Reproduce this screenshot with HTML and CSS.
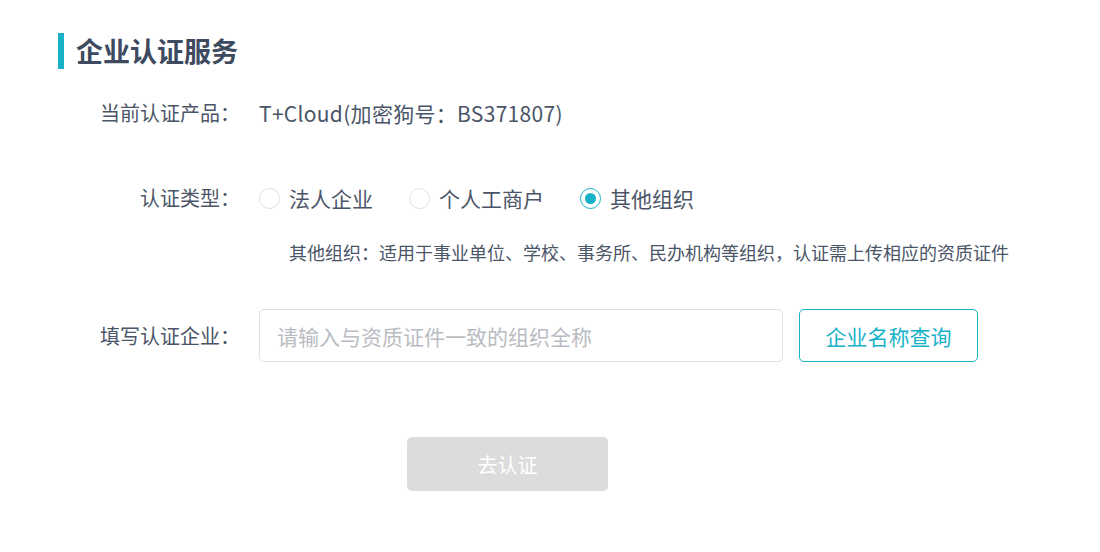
FILE: index.html
```html
<!DOCTYPE html>
<html lang="zh-CN">
<head>
    <meta charset="UTF-8">
    <meta name="viewport" content="width=device-width, initial-scale=1.0">
    <title>企业认证服务</title>
    <link rel="stylesheet" href="styles.css">
</head>
<body>

<div class="page">
    <h1 class="title">企业认证服务</h1>

    <div class="row row-product">
        <span class="label">当前认证产品：</span>
        <span class="value">T+Cloud(加密狗号：BS371807)</span>
    </div>

    <div class="row row-type">
        <span class="label">认证类型：</span>
        <div class="radios">
            <label class="radio"><span class="dot"></span>法人企业</label>
            <label class="radio"><span class="dot"></span>个人工商户</label>
            <label class="radio checked"><span class="dot"></span>其他组织</label>
        </div>
    </div>

    <p class="hint">其他组织：适用于事业单位、学校、事务所、民办机构等组织，认证需上传相应的资质证件</p>

    <div class="row row-company">
        <span class="label">填写认证企业：</span>
        <input type="text" class="company-input" placeholder="请输入与资质证件一致的组织全称">
        <button type="button" class="btn-query">企业名称查询</button>
    </div>

    <button type="button" class="btn-submit" disabled>去认证</button>
</div>

</body>
</html>
```

FILE: styles.css
```css
body {
    margin: 0;
    background-color: #fff;
    font-family: "Noto Sans CJK SC", "Noto Sans", sans-serif;
    color: #4b5568;
}

.page {
    padding: 33px 0 0 58px;
}

.title {
    margin: 0;
    height: 36px;
    line-height: 36px;
    border-left: 6px solid #17b2c8;
    padding-left: 12px;
    font-size: 27px;
    font-weight: bold;
    color: #3d4a60;
}

.row {
    display: flex;
    align-items: center;
    font-size: 20px;
    line-height: 30px;
}

.label {
    width: 182px;
    flex-shrink: 0;
    text-align: right;
    margin-right: 19px;
}

.value {
    font-size: 21px;
    letter-spacing: 0.3px;
}

.row-product {
    margin-top: 29px;
}

.row-type {
    margin-top: 55px;
}

.radios {
    display: flex;
    gap: 36px;
    font-size: 21px;
}

.radio {
    display: flex;
    align-items: center;
    gap: 9px;
}

.dot {
    width: 19px;
    height: 19px;
    border: 1px solid #dcdfe3;
    border-radius: 50%;
    box-sizing: content-box;
    position: relative;
}

.radio.checked .dot {
    border-color: #17b2c8;
}

.radio.checked .dot::after {
    content: "";
    position: absolute;
    left: 4px;
    top: 4px;
    width: 11px;
    height: 11px;
    border-radius: 50%;
    background-color: #17b2c8;
}

.hint {
    margin: 27px 0 0 231px;
    font-size: 18px;
    line-height: 24px;
}

.row-company {
    margin-top: 45px;
}

.company-input {
    width: 524px;
    height: 53px;
    box-sizing: border-box;
    padding: 0 17px;
    border: 1px solid #dedfe2;
    border-radius: 5px;
    font-family: inherit;
    font-size: 21px;
    color: #4b5568;
    outline: none;
}

.company-input::placeholder {
    color: #b9bcc2;
}

.btn-query {
    margin-left: 16px;
    width: 179px;
    height: 53px;
    border: 1px solid #17b2c8;
    border-radius: 5px;
    background-color: #fff;
    color: #17b2c8;
    font-family: inherit;
    font-size: 21px;
    cursor: pointer;
}

.btn-submit {
    display: block;
    margin: 75px 0 0 349px;
    width: 201px;
    height: 54px;
    border: none;
    border-radius: 5px;
    background-color: #dcdcdc;
    color: #fff;
    font-family: inherit;
    font-size: 20px;
}
```
